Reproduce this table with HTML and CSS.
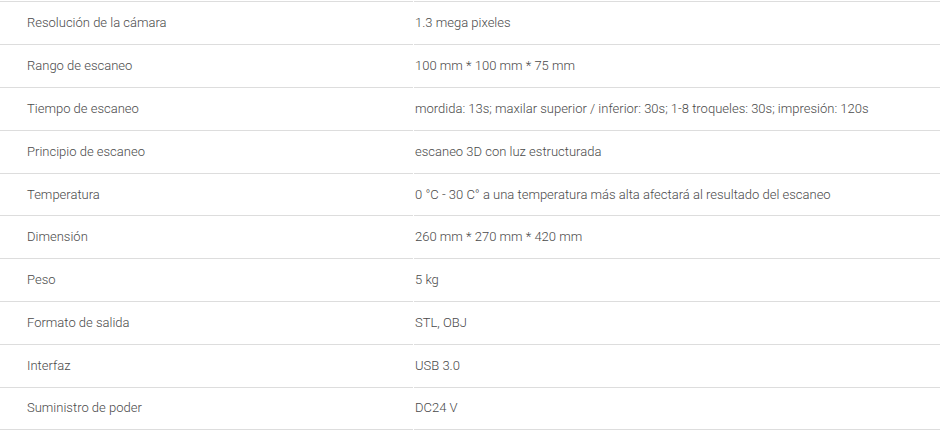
FILE: index.html
```html
<!DOCTYPE html>
<html lang="es">
<head>
<meta charset="utf-8">
<title>Especificaciones</title>
<link rel="stylesheet" href="styles.css">
</head>
<body>
<table class="specs">
  <tbody>
    <tr><td class="label">Resolución de la cámara</td><td class="value">1.3 mega pixeles</td></tr>
    <tr><td class="label">Rango de escaneo</td><td class="value">100 mm * 100 mm * 75 mm</td></tr>
    <tr><td class="label">Tiempo de escaneo</td><td class="value">mordida: 13s; maxilar superior / inferior: 30s; 1-8 troqueles: 30s; impresión: 120s</td></tr>
    <tr><td class="label">Principio de escaneo</td><td class="value">escaneo 3D con luz estructurada</td></tr>
    <tr><td class="label">Temperatura</td><td class="value">0 °C - 30 C° a una temperatura más alta afectará al resultado del escaneo</td></tr>
    <tr><td class="label">Dimensión</td><td class="value">260 mm * 270 mm * 420 mm</td></tr>
    <tr><td class="label">Peso</td><td class="value">5 kg</td></tr>
    <tr><td class="label">Formato de salida</td><td class="value">STL, OBJ</td></tr>
    <tr><td class="label">Interfaz</td><td class="value">USB 3.0</td></tr>
    <tr><td class="label">Suministro de poder</td><td class="value">DC24 V</td></tr>
  </tbody>
</table>
</body>
</html>
```

FILE: styles.css
```css
html, body {
  margin: 0;
  padding: 0;
  background: #ffffff;
  overflow: hidden;
}
body {
  padding-top: 1px;
  font-family: Roboto, "Liberation Sans", sans-serif;
  font-size: 13px;
  font-weight: 300;
  color: #4a4a4a;
}
.specs {
  width: 942px;
  border-collapse: separate;
  border-spacing: 1px 0;
  margin: 0 -1px;
  table-layout: fixed;
}
.specs td {
  height: 41.9px;
  border-top: 1px solid #dddddd;
  vertical-align: middle;
  white-space: nowrap;
  padding: 0;
  line-height: 16px;
}
.specs tr:last-child td {
  border-bottom: 1px solid #dddddd;
  height: 40.9px;
}
.specs .label {
  width: 386px;
  padding-left: 27px;
}
.specs .value {
  padding-left: 1px;
}
```
